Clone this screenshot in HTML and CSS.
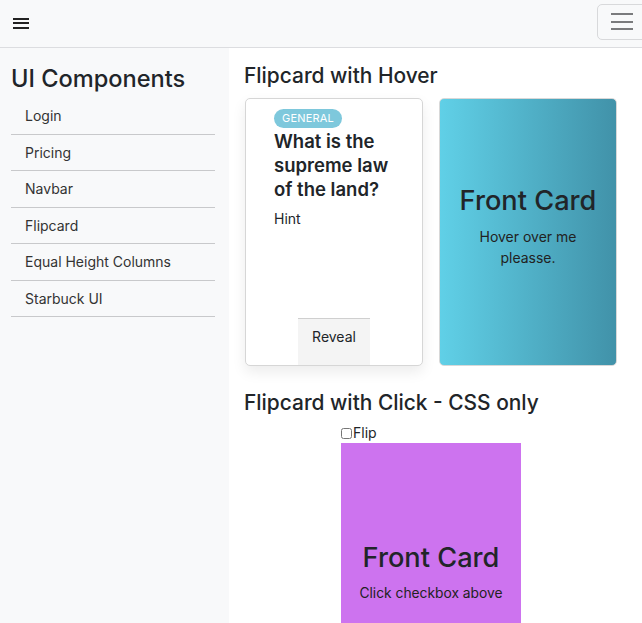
FILE: index.html
```html
<!DOCTYPE html>
<html>
<head>
<meta charset="utf-8">
<link rel="stylesheet" href="styles.css">
</head>
<body>
<header class="navbar">
  <span class="menu-icon"><i></i><i></i><i></i></span>
  <button class="toggler"><span class="toggler-icon"><i></i><i></i><i></i></span></button>
</header>
<div class="layout">
  <aside class="sidebar">
    <h2 class="side-title">UI Components</h2>
    <ul class="side-list">
      <li>Login</li>
      <li>Pricing</li>
      <li>Navbar</li>
      <li>Flipcard</li>
      <li>Equal Height Columns</li>
      <li>Starbuck UI</li>
    </ul>
  </aside>
  <main class="main">
    <h3 class="section-title">Flipcard with Hover</h3>
    <div class="cards">
      <div class="card question">
        <div class="q-body">
          <span class="badge">GENERAL</span>
          <div class="q-text">What is the supreme law of the land?</div>
          <div class="hint">Hint</div>
        </div>
        <div class="reveal">Reveal</div>
      </div>
      <div class="card front-blue">
        <div class="front-title">Front Card</div>
        <div class="front-sub">Hover over me<br>pleasse.</div>
      </div>
    </div>
    <h3 class="section-title second">Flipcard with Click - CSS only</h3>
    <div class="click-area">
      <label class="flip-label"><input type="checkbox" class="flip-check">Flip</label>
      <div class="front-purple">
        <div class="front-title">Front Card</div>
        <div class="front-sub">Click checkbox above</div>
      </div>
    </div>
  </main>
</div>
</body>
</html>
```
FILE: styles.css
```css
html, body {
  margin: 0;
  padding: 0;
  height: 100%;
  overflow: hidden;
}
body {
  font-family: Inter, "Liberation Sans", sans-serif;
  color: #212529;
  background: #fff;
}
.navbar {
  height: 47px;
  background: #f8f9fa;
  border-bottom: 1px solid #dcdde0;
  display: flex;
  align-items: center;
  justify-content: space-between;
  overflow: hidden;
}
.menu-icon {
  margin-left: 13px;
  width: 16px;
  display: flex;
  flex-direction: column;
  gap: 2.5px;
  margin-top: -1px;
}
.menu-icon i {
  display: block;
  height: 2px;
  background: #222;
}
.toggler {
  width: 56px;
  height: 36px;
  margin-right: -11px;
  margin-top: -4px;
  background: transparent;
  border: 1px solid #d8d9db;
  border-radius: 5px;
  padding: 0 0 0 13px;
  display: flex;
  align-items: center;
}
.toggler-icon {
  width: 22px;
  display: flex;
  flex-direction: column;
  gap: 5.3px;
}
.toggler-icon i {
  display: block;
  height: 2px;
  background: #7a7b7d;
}
.layout {
  display: flex;
  height: calc(100% - 48px);
}
.sidebar {
  width: 229px;
  flex: none;
  background: #f8f9fa;
  padding: 0 14px 0 11px;
  box-sizing: border-box;
}
.side-title {
  margin: 16px 0 4px;
  font-size: 23.6px;
  font-weight: 500;
  line-height: 30px;
}
.side-list {
  list-style: none;
  margin: 0;
  padding: 0;
}
.side-list li {
  height: 36.5px;
  box-sizing: border-box;
  border-bottom: 1px solid #c8c9cb;
  padding-left: 14px;
  font-size: 14px;
  line-height: 35px;
  color: #333;
}
.main {
  flex: 1;
  padding: 0 15px;
}
.section-title {
  margin: 14px 0 8px;
  font-size: 20.9px;
  font-weight: 500;
  line-height: 28px;
}
.section-title.second {
  margin-top: 23px;
  margin-bottom: 0;
}
.cards {
  display: flex;
  gap: 16px;
  padding-left: 1px;
}
.card {
  width: 178px;
  height: 268px;
  box-sizing: border-box;
  border-radius: 5px;
}
.question {
  border: 1px solid #d6d6d6;
  box-shadow: 0 6px 14px rgba(0,0,0,0.08);
  display: flex;
  flex-direction: column;
  align-items: center;
  background: #fff;
}
.q-body {
  align-self: stretch;
  padding: 7px 20px 0 28px;
  flex: 1;
}
.badge {
  display: inline-block;
  background: #7ec8dc;
  color: #fff;
  font-size: 11px;
  line-height: 19px;
  padding: 0 8px;
  border-radius: 10px;
  letter-spacing: 0.2px;
}
.q-text {
  font-size: 18.5px;
  font-weight: 600;
  line-height: 24px;
  margin-top: 1px;
}
.hint {
  font-size: 14px;
  margin-top: 9px;
}
.reveal {
  width: 72px;
  height: 46px;
  background: #f4f4f4;
  border-top: 1px solid #cfcfcf;
  font-size: 14px;
  line-height: 36px;
  text-align: center;
}
.front-blue {
  background: linear-gradient(to right, #60d0e7, #4192a9);
  border: 1px solid #d8d8d8;
  display: flex;
  flex-direction: column;
  align-items: center;
  justify-content: center;
  text-align: center;
  padding-bottom: 13px;
}
.front-title {
  font-size: 27.2px;
  font-weight: 500;
  line-height: 34px;
}
.front-sub {
  font-size: 14px;
  line-height: 21px;
  margin-top: 8px;
  color: #222;
}
.click-area {
  margin-left: 97px;
  display: flex;
  flex-direction: column;
  align-items: flex-start;
}
.flip-label {
  font-size: 14px;
  line-height: 18px;
  margin-top: 7px;
  display: flex;
  align-items: center;
}
.flip-check {
  margin: 0 1px 0 0;
  width: 11px;
  height: 11px;
}
.front-purple {
  width: 180px;
  height: 268px;
  margin-top: 1px;
  background: #cd73ef;
  display: flex;
  flex-direction: column;
  align-items: center;
  text-align: center;
  padding-top: 98px;
  box-sizing: border-box;
}
.front-purple .front-sub {
  font-size: 13.8px;
}
```
